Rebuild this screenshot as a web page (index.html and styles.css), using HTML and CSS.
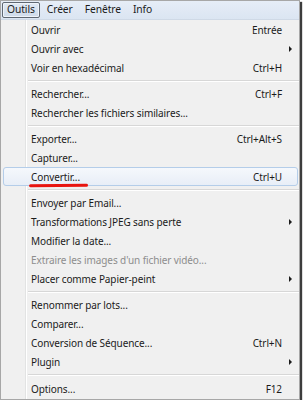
FILE: index.html
```html
<!DOCTYPE html>
<html lang="fr">
<head>
    <meta charset="UTF-8">
    <title>Outils</title>
    <link rel="stylesheet" href="styles.css">
</head>
<body>
<div class="frame">
    <div class="menubar">
        <span class="top-item active">Outils</span>
        <span class="top-item">Créer</span>
        <span class="top-item">Fenêtre</span>
        <span class="top-item">Info</span>
    </div>

    <div class="menu">
        <div class="item"><span class="label">Ouvrir</span><span class="key">Entrée</span><span class="sub"></span></div>
        <div class="item"><span class="label">Ouvrir avec</span><span class="key"></span><span class="sub"><i class="arrow"></i></span></div>
        <div class="item"><span class="label">Voir en hexadécimal</span><span class="key">Ctrl+H</span><span class="sub"></span></div>
        <div class="sep"></div>
        <div class="item"><span class="label">Rechercher...</span><span class="key">Ctrl+F</span><span class="sub"></span></div>
        <div class="item"><span class="label">Rechercher les fichiers similaires...</span><span class="key"></span><span class="sub"></span></div>
        <div class="sep"></div>
        <div class="item"><span class="label">Exporter...</span><span class="key">Ctrl+Alt+S</span><span class="sub"></span></div>
        <div class="item"><span class="label">Capturer...</span><span class="key"></span><span class="sub"></span></div>
        <div class="item hover"><span class="label">Convertir...<span class="mark"></span></span><span class="key">Ctrl+U</span><span class="sub"></span></div>
        <div class="sep"></div>
        <div class="item"><span class="label">Envoyer par Email...</span><span class="key"></span><span class="sub"></span></div>
        <div class="item"><span class="label">Transformations JPEG sans perte</span><span class="key"></span><span class="sub"><i class="arrow"></i></span></div>
        <div class="item"><span class="label">Modifier la date...</span><span class="key"></span><span class="sub"></span></div>
        <div class="item disabled"><span class="label">Extraire les images d'un fichier vidéo...</span><span class="key"></span><span class="sub"></span></div>
        <div class="item"><span class="label">Placer comme Papier-peint</span><span class="key"></span><span class="sub"><i class="arrow"></i></span></div>
        <div class="sep"></div>
        <div class="item"><span class="label">Renommer par lots...</span><span class="key"></span><span class="sub"></span></div>
        <div class="item"><span class="label">Comparer...</span><span class="key"></span><span class="sub"></span></div>
        <div class="item"><span class="label">Conversion de Séquence...</span><span class="key">Ctrl+N</span><span class="sub"></span></div>
        <div class="item"><span class="label">Plugin</span><span class="key"></span><span class="sub"><i class="arrow"></i></span></div>
        <div class="sep wide"></div>
        <div class="item"><span class="label">Options...</span><span class="key">F12</span><span class="sub"></span></div>
    </div>
</div>
</body>
</html>
```

FILE: styles.css
```css
body {
    margin: 0;
    background: #ffffff;
    font-family: "Noto Sans", "Open Sans", sans-serif;
    font-size: 10px;
    letter-spacing: -0.1px;
    color: #1b1b1b;
}
.frame {
    width: 298px;
    height: 398px;
    border: 1px solid #a7a7a7;
    background: #f0f0f0;
    box-shadow: 2px 2px 1px #3c3c3c;
    display: flex;
    flex-direction: column;
    overflow: hidden;
}
.menubar {
    height: 18px;
    display: flex;
    align-items: center;
    padding-left: 1px;
    background: linear-gradient(180deg, #e6edf7 0%, #dbe5f2 100%);
    border-bottom: 1px solid #cfd9e6;
}
.top-item {
    padding: 0 5px;
    line-height: 13px;
    height: 16px;
    box-sizing: border-box;
    border: 1px solid transparent;
    font-size: 10.3px;
}
.top-item.active {
    padding: 0 4px;
    border: 1px solid #5f6873;
    border-radius: 2px;
    background: linear-gradient(180deg, #dfe8f3, #cfdbea);
    box-shadow: inset 0 0 0 1px #eef3f9;
    margin-right: 1px;
}
.menu {
    flex: 1;
    padding: 0 1px 0 2px;
    background: linear-gradient(90deg, #f0f0f0 0, #f0f0f0 24px, #e2e3e3 24px, #e2e3e3 25px, #ffffff 25px, #ffffff 26px, #f0f0f0 26px);
}
.item {
    display: flex;
    align-items: center;
    height: 19px;
    padding-left: 27px;
    box-sizing: border-box;
    border: 1px solid transparent;
    border-radius: 3px;
}
.item.hover {
    border-color: #b4cde9;
    background: linear-gradient(180deg, #f5f8fc, #e8eef7);
}
.label {
    flex: 1;
    white-space: nowrap;
    position: relative;
}
.key {
    white-space: nowrap;
}
.sub {
    width: 15px;
    display: flex;
    justify-content: center;
}
.arrow {
    width: 0;
    height: 0;
    border-top: 3px solid transparent;
    border-bottom: 3px solid transparent;
    border-left: 3px solid #1b1b1b;
    margin-left: 1px;
}
.disabled .label {
    color: #8d8d8d;
}
.sep {
    height: 7px;
    margin-left: 25px;
    margin-right: -1px;
    background: linear-gradient(180deg, transparent 0, transparent 3px, #d7d7d7 3px, #d7d7d7 4px, #ffffff 4px, #ffffff 5px, transparent 5px);
}
.sep.wide {
    height: 8px;
}
.mark {
    position: absolute;
    left: -2px;
    top: 14px;
    width: 59px;
    height: 2.5px;
    background: #e8140f;
    border-radius: 2px;
    transform: rotate(-0.5deg);
}
```
